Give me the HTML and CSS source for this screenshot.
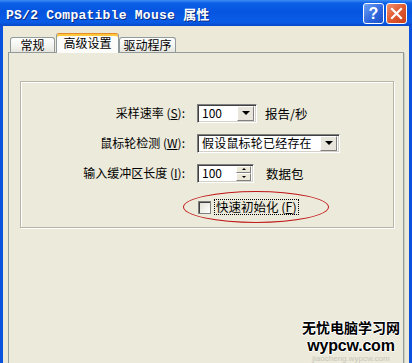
FILE: index.html
```html
<!DOCTYPE html>
<html lang="zh-CN">
<head>
    <meta charset="UTF-8">
    <meta name="viewport" content="width=device-width, initial-scale=1.0">
    <title>PS/2 Compatible Mouse 属性</title>
    <link rel="stylesheet" href="styles.css">
</head>
<body>
    <div class="window">
        <div class="titlebar">
            <span class="title">PS/2 Compatible Mouse <span class="cjk">属性</span></span>
            <div class="tb-btns">
                <span class="tb-btn help">?</span>
                <span class="tb-btn close">
                    <svg width="13" height="13" viewBox="0 0 13 13"><path d="M2 2 L11 11 M11 2 L2 11" stroke="#fff" stroke-width="2.2" stroke-linecap="square"/></svg>
                </span>
            </div>
        </div>
        <div class="frame">
            <div class="tabs">
                <div class="tab t1">常规</div>
                <div class="tab active">高级设置</div>
                <div class="tab t3">驱动程序</div>
            </div>
            <div class="panel">
                <div class="group">
                    <div class="form">
                        <label class="lbl">采样速率 (<u>S</u>):</label>
                        <div class="ctl">
                            <div class="combo small"><span class="val">100</span><span class="drop"><i class="arrow"></i></span></div>
                            <span class="unit">报告/秒</span>
                        </div>
                        <label class="lbl">鼠标轮检测 (<u>W</u>):</label>
                        <div class="ctl">
                            <div class="combo wide"><span class="val">假设鼠标轮已经存在</span><span class="drop"><i class="arrow"></i></span></div>
                        </div>
                        <label class="lbl">输入缓冲区长度 (<u>I</u>):</label>
                        <div class="ctl">
                            <div class="spin"><span class="val">100</span><span class="spin-btns"><span class="sb"><i class="up"></i></span><span class="sb"><i class="down"></i></span></span></div>
                            <span class="unit gap">数据包</span>
                        </div>
                    </div>
                    <div class="check-row">
                        <span class="checkbox"></span>
                        <span class="check-label">快速初始化 (<u>F</u>)</span>
                        <span class="ring"></span>
                    </div>
                </div>
            </div>
        </div>
        <div class="watermark">
            <div class="wm-cn">无忧电脑学习网</div>
            <div class="wm-en">wypcw.com</div>
            <div class="wm-sub">jiaocheng.wypcw.com</div>
        </div>
    </div>
</body>
</html>
```

FILE: styles.css
```css
body {
    margin: 0;
    font-family: "Noto Sans CJK SC", "Liberation Sans", sans-serif;
    font-size: 12px;
    color: #000;
    background: #ece9d8;
}
.window {
    position: relative;
    width: 412px;
    height: 363px;
    overflow: hidden;
    display: flex;
    flex-direction: column;
    background: #0a52dd;
}
.titlebar {
    height: 26px;
    flex: none;
    display: flex;
    align-items: center;
    justify-content: space-between;
    padding: 0 5px 0 6px;
    background: linear-gradient(to bottom, #3d8df5 0%, #0a5fe6 12%, #0555e0 45%, #0a5ce6 85%, #0848c8 100%);
    box-sizing: border-box;
}
.title {
    color: #fff;
    font-family: "Liberation Mono", monospace;
    font-weight: bold;
    font-size: 13px;
    letter-spacing: 0.25px;
    text-shadow: 1px 1px 0 #0a2a80;
    white-space: nowrap;
}
.title .cjk {
    font-family: "Noto Sans CJK SC", sans-serif;
    font-size: 13px;
    letter-spacing: 0;
}
.tb-btns {
    display: flex;
    gap: 2px;
    margin-top: 1px;
}
.tb-btn {
    width: 19px;
    height: 19px;
    border: 1px solid #fff;
    border-radius: 3px;
    display: flex;
    align-items: center;
    justify-content: center;
    color: #fff;
    font-family: "Liberation Sans", sans-serif;
    font-weight: bold;
    font-size: 16px;
}
.help {
    background: linear-gradient(135deg, #6ea0f5, #2c64dc 60%, #1e50c8);
}
.close {
    background: linear-gradient(135deg, #f09070, #e05a30 50%, #c8401c);
}
.frame {
    flex: 1;
    margin: 0 3px;
    padding: 0 5px;
    background: #ece9d8;
    display: flex;
    flex-direction: column;
}
.tabs {
    height: 26px;
    flex: none;
    display: flex;
    align-items: flex-end;
    padding-left: 2px;
}
.tab {
    height: 15px;
    line-height: 14px;
    box-sizing: border-box;
    border: 1px solid #919b9c;
    border-bottom: none;
    border-radius: 3px 3px 0 0;
    background: linear-gradient(to bottom, #ffffff, #f3f3ef 60%, #e6e5dc);
    text-align: center;
}
.t1 {
    width: 45px;
}
.t3 {
    width: 57px;
}
.tab.active {
    width: 63px;
    height: 20px;
    line-height: 18px;
    margin-left: 1px;
    margin-bottom: -1px;
    position: relative;
    z-index: 1;
    background: #fcfcfa;
    border-top: 1px solid #e68b2c;
    box-shadow: inset 0 2px 0 #ffc83c;
}
.panel {
    flex: 1;
    min-height: 330px;
    border: 1px solid #919b9c;
    box-shadow: 1px 1px 0 #d0cebf;
    background: #eceadb;
    padding: 28px 9px 0 11px;
}
.group {
    border: 1px solid #b8b5a6;
    box-shadow: inset 1px 1px 0 #fff, 1px 1px 0 #fff;
    padding: 21px 0 12px 0;
}
.form {
    display: grid;
    grid-template-columns: 164px 1fr;
    column-gap: 12px;
    row-gap: 10px;
}
.lbl {
    height: 20px;
    line-height: 20px;
    text-align: right;
    white-space: nowrap;
}
.ctl {
    height: 20px;
    display: flex;
    align-items: center;
}
.combo, .spin {
    height: 19px;
    box-sizing: border-box;
    background: #fff;
    border: 1px solid #7f9db9;
    border-color: #808080 #fff #fff #808080;
    box-shadow: inset 1px 1px 0 #404040, inset -1px -1px 0 #d4d0c8;
    display: flex;
    align-items: center;
    padding: 2px 2px 2px 4px;
}
.small {
    width: 60px;
}
.wide {
    width: 143px;
}
.spin {
    width: 57px;
}
.val {
    flex: 1;
    white-space: nowrap;
    line-height: 14px;
}
.combo .val {
    font-size: 12px;
}
.wide .val {
    letter-spacing: 0.2px;
}
.drop {
    width: 15px;
    height: 13px;
    background: #e8e6dc;
    border: 1px solid;
    border-color: #fff #808080 #808080 #fff;
    display: flex;
    align-items: center;
    justify-content: center;
}
.arrow {
    width: 0;
    height: 0;
    border-left: 4px solid transparent;
    border-right: 4px solid transparent;
    border-top: 4px solid #000;
}
.spin-btns {
    display: flex;
    flex-direction: column;
    width: 15px;
    height: 15px;
}
.sb {
    flex: 1;
    background: #ece9d8;
    border: 1px solid;
    border-color: #fff #808080 #808080 #fff;
    display: flex;
    align-items: center;
    justify-content: center;
}
.up, .down {
    width: 0;
    height: 0;
    border-left: 2px solid transparent;
    border-right: 2px solid transparent;
}
.up {
    border-bottom: 2px solid #000;
}
.down {
    border-top: 2px solid #000;
}
.unit {
    margin-left: 8px;
    font-size: 12.5px;
}
.unit.gap {
    margin-left: 12px;
}
.check-row {
    position: relative;
    margin-top: 16px;
    height: 16px;
    padding-left: 177px;
    display: flex;
    align-items: center;
}
.checkbox {
    width: 13px;
    height: 13px;
    box-sizing: border-box;
    border: 1px solid #808080;
    box-shadow: inset 1px 1px 0 #404040;
    background: linear-gradient(135deg, #e0ded4, #fff);
}
.check-label {
    margin-left: 4px;
    padding: 0 1px;
    line-height: 14px;
    outline: 1px dotted #000;
    font-size: 12.5px;
}
.ring {
    position: absolute;
    left: 162px;
    top: -8px;
    width: 146px;
    height: 32px;
    box-sizing: border-box;
    border: 1px solid #c01818;
    border-radius: 50%;
}
.watermark {
    position: absolute;
    right: 12px;
    bottom: 0;
    text-align: center;
}
.wm-cn {
    font-family: "Noto Sans CJK SC", sans-serif;
    font-weight: bold;
    font-size: 14px;
    line-height: 19px;
    color: #000;
    text-shadow: -1px 0 #fff, 1px 0 #fff, 0 -1px #fff, 0 1px #fff;
}
.wm-en {
    font-family: "Liberation Sans", sans-serif;
    font-weight: bold;
    font-size: 16px;
    line-height: 17px;
    letter-spacing: -0.2px;
    color: #000;
    text-shadow: -1px 0 #fff, 1px 0 #fff, 0 -1px #fff, 0 1px #fff;
}
.wm-sub {
    font-family: "Liberation Sans", sans-serif;
    font-size: 8px;
    line-height: 9px;
    color: #c9c6b8;
}
```
